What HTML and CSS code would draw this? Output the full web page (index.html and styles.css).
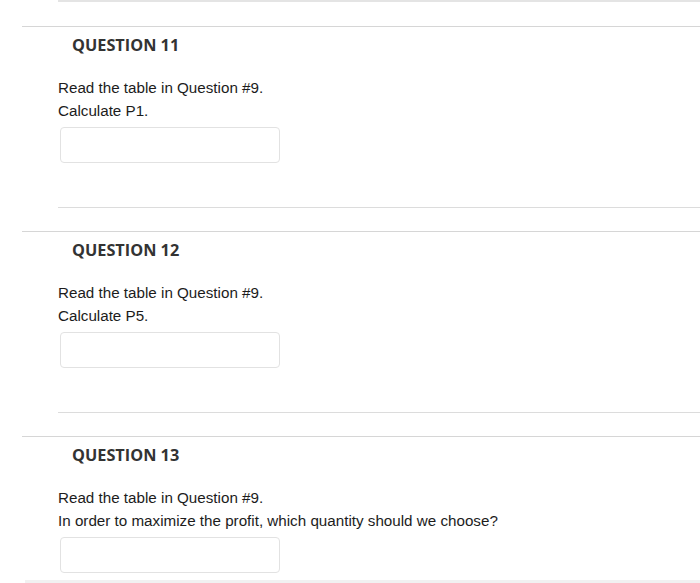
FILE: index.html
```html
<!DOCTYPE html>
<html>
<head>
<meta charset="utf-8">
<link rel="stylesheet" href="styles.css">
</head>
<body>
<div class="prev-rule"></div>

<section class="question">
  <h2 class="q-title">QUESTION 11</h2>
  <div class="q-body">
    <p class="q-text">Read the table in Question #9.</p>
    <p class="q-text">Calculate P1.</p>
    <input class="q-input" type="text">
  </div>
</section>

<section class="question">
  <h2 class="q-title">QUESTION 12</h2>
  <div class="q-body">
    <p class="q-text">Read the table in Question #9.</p>
    <p class="q-text">Calculate P5.</p>
    <input class="q-input" type="text">
  </div>
</section>

<section class="question last">
  <h2 class="q-title">QUESTION 13</h2>
  <div class="q-body">
    <p class="q-text">Read the table in Question #9.</p>
    <p class="q-text">In order to maximize the profit, which quantity should we choose?</p>
    <input class="q-input" type="text">
  </div>
</section>
<div class="footer-band"></div>
</body>
</html>
```
FILE: styles.css
```css
html, body {
  margin: 0;
  padding: 0;
  background: #fff;
  overflow: hidden;
}
body {
  font-family: "Liberation Sans", Arial, sans-serif;
  color: #1c1c1c;
}
.prev-rule {
  margin-left: 58px;
  border-top: 2px solid #e4e4e4;
  margin-bottom: 24px;
}
.question {
  margin-left: 22px;
  border-top: 1px solid #d6d6d6;
  margin-bottom: 23px;
}
.question.last {
  margin-bottom: 0;
}
.q-title {
  margin: 0;
  padding: 7px 0 0 50px;
  font-family: "Open Sans", sans-serif;
  font-weight: 700;
  font-size: 16.3px;
  line-height: 22px;
  color: #333;
}
.q-body {
  margin-left: 36px;
  padding-top: 20px;
  padding-bottom: 44px;
  border-bottom: 1px solid #dcdcdc;
}
.question.last .q-body {
  border-bottom: none;
  padding-bottom: 7px;
}
.q-text {
  margin: 0;
  font-size: 15.2px;
  line-height: 23px;
}
.q-input {
  display: block;
  box-sizing: border-box;
  margin: 5px 0 0 2px;
  width: 220px;
  height: 36px;
  border: 1px solid #e2e2e2;
  border-radius: 4px;
  background: #fff;
  outline: none;
}
.footer-band {
  margin-left: 25px;
  height: 10px;
  background: #f1f1f1;
}
```
